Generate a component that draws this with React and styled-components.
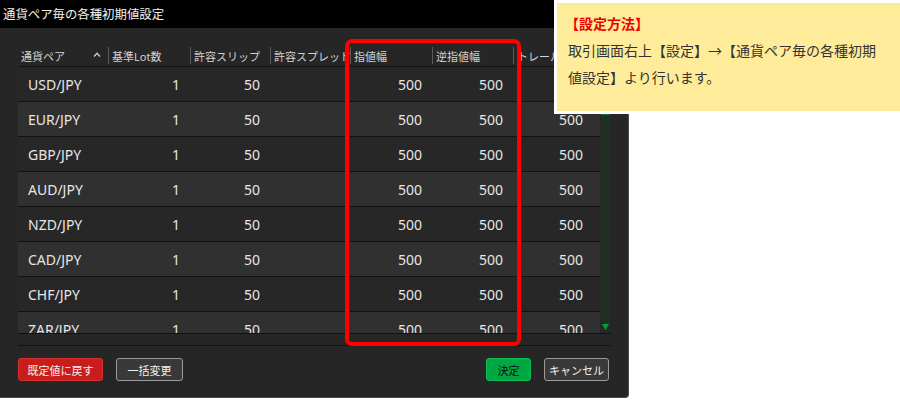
import React from 'react'
import styled, {createGlobalStyle} from 'styled-components'

const GlobalStyle = createGlobalStyle`
    body {
        margin: 0;
        background: #fff;
        font-family: "Noto Sans", "Noto Sans CJK JP", sans-serif;
    }
`

const COLS = '90px 82px 80px 80px 82px 81px 80px'

const pairs = ['USD/JPY', 'EUR/JPY', 'GBP/JPY', 'AUD/JPY', 'NZD/JPY', 'CAD/JPY', 'CHF/JPY', 'ZAR/JPY']

const headers = ['通貨ペア', '基準Lot数', '許容スリップ', '許容スプレッド', '指値幅', '逆指値幅', 'トレール幅']

const App = () => {
    return (
        <Page>
            <GlobalStyle />
            <Dialog>
                <TitleBar>通貨ペア毎の各種初期値設定</TitleBar>
                <Body>
                    <Table>
                        <HeaderRow>
                            {headers.map((h, i) =>
                                <HeaderCell key={h} first={i === 0}>
                                    <span>{h}</span>
                                    {i === 0 &&
                                        <svg width="8" height="5" viewBox="0 0 8 5">
                                            <path d="M1 4.5 L4 1.2 L7 4.5" fill="none" stroke="#cfcfcf" strokeWidth="1.3"/>
                                        </svg>}
                                </HeaderCell>
                            )}
                        </HeaderRow>
                        <ListArea>
                            <Rows>
                                {pairs.map((p, i) =>
                                    <Row key={p} alt={i % 2 === 1}>
                                        <Cell left>{p}</Cell>
                                        <Cell>1</Cell>
                                        <Cell>50</Cell>
                                        <Cell></Cell>
                                        <Cell>500</Cell>
                                        <Cell>500</Cell>
                                        <Cell>500</Cell>
                                    </Row>
                                )}
                            </Rows>
                            <ScrollTrack>
                                <ScrollThumb />
                                <svg width="9" height="8" viewBox="0 0 9 8">
                                    <path d="M1 1 L8 1 L4.5 7 Z" fill="#0b9a3d"/>
                                </svg>
                            </ScrollTrack>
                        </ListArea>
                        <HScroll />
                    </Table>
                    <Footer>
                        <ButtonGroup>
                            <Button variant="danger" w={85}>既定値に戻す</Button>
                            <Button w={67}>一括変更</Button>
                        </ButtonGroup>
                        <ButtonGroup>
                            <Button variant="ok" w={45}>決定</Button>
                            <Button w={65}>キャンセル</Button>
                        </ButtonGroup>
                    </Footer>
                </Body>
            </Dialog>
            <Highlight />
            <Note>
                <NoteTitle>【設定方法】</NoteTitle>
                <NoteText>取引画面右上【設定】→【通貨ペア毎の各種初期</NoteText>
                <NoteText>値設定】より行います。</NoteText>
            </Note>
        </Page>
    )
}

const Page = styled.div`
    position: relative;
    width: 900px;
    height: 400px;
    overflow: hidden;
    background: #fff;
`

const Dialog = styled.div`
    width: 628px;
    height: 397px;
    display: flex;
    flex-direction: column;
    background: #262626;
    border-right: 1px solid #4c4c4c;
    border-bottom: 1px solid #4c4c4c;
    border-bottom-right-radius: 4px;
    overflow: hidden;
`

const TitleBar = styled.div`
    height: 28px;
    flex-shrink: 0;
    display: flex;
    align-items: center;
    padding-left: 3px;
    background: #000;
    color: #f2f2f2;
    font-size: 12.4px;
`

const Body = styled.div`
    flex: 1;
    padding: 16px 0 0 18px;
    display: flex;
    flex-direction: column;
`

const Table = styled.div`
    width: 593px;
    display: flex;
    flex-direction: column;
`

const HeaderRow = styled.div`
    display: grid;
    grid-template-columns: ${COLS};
    height: 22px;
    border-bottom: 1px solid #121212;
    width: 582px;
`

const HeaderCell = styled.div`
    display: flex;
    align-items: center;
    justify-content: space-between;
    padding: 0 7px 0 ${props => props.first ? '3px' : '3px'};
    font-size: 11px;
    color: #d4d4d4;
    white-space: nowrap;
    overflow: hidden;
    position: relative;
    border-left: ${props => props.first ? 'none' : '1px solid #5a5a5a'};
    margin: 3px 0 2px;
    svg {
        flex-shrink: 0;
        margin-bottom: 3px;
    }
`

const ListArea = styled.div`
    display: flex;
    height: 266px;
`

const Rows = styled.div`
    width: 582px;
    height: 266px;
    overflow: hidden;
`

const Row = styled.div`
    display: grid;
    grid-template-columns: ${COLS};
    height: 34px;
    border-bottom: 1px solid #121212;
    background: ${props => props.alt ? '#303030' : '#272727'};
`

const Cell = styled.div`
    display: flex;
    align-items: center;
    justify-content: ${props => props.left ? 'flex-start' : 'flex-end'};
    padding: ${props => props.left ? '0 0 0 10px' : '0 10px 0 0'};
    font-size: 14px;
    color: #e6e6e6;
`

const ScrollTrack = styled.div`
    width: 9px;
    margin-left: 1px;
    height: 264px;
    background: #1f2f23;
    display: flex;
    flex-direction: column;
    justify-content: space-between;
    align-items: center;
    padding-bottom: 0;
`

const ScrollThumb = styled.div`
    width: 9px;
    height: 48px;
    background: #0a7a30;
`

const HScroll = styled.div`
    height: 11px;
    border-top: 1px solid #121212;
    border-bottom: 1px solid #121212;
`

const Footer = styled.div`
    display: flex;
    justify-content: space-between;
    margin-top: 12px;
    padding-right: 19px;
`

const ButtonGroup = styled.div`
    display: flex;
    gap: 13px;
`

const Button = styled.button`
    width: ${props => props.w}px;
    height: 23px;
    padding: 0;
    border-radius: 3px;
    font-family: "Noto Sans", "Noto Sans CJK JP", sans-serif;
    font-size: 11px;
    background: ${props => props.variant === 'danger' ? '#c91d1d' : props.variant === 'ok' ? '#00a843' : '#393939'};
    border: 1px solid ${props => props.variant === 'danger' ? '#d83030' : props.variant === 'ok' ? '#0fbf55' : '#9a9a9a'};
    color: ${props => props.variant === 'ok' ? '#0d0d0d' : '#f0f0f0'};
`

const Highlight = styled.div`
    position: absolute;
    left: 345px;
    top: 39px;
    width: 168px;
    height: 299px;
    border: 4px solid #f00;
    border-radius: 7px;
    pointer-events: none;
`

const Note = styled.div`
    position: absolute;
    left: 554px;
    top: 0;
    width: 343px;
    height: 100px;
    background: #ffec9a;
    border: 3px solid #fff;
    border-right: none;
    padding: 8px 0 0 11px;
    box-sizing: content-box;
    color: #333;
`

const NoteTitle = styled.div`
    font-size: 14px;
    font-weight: bold;
    color: #ee0000;
    line-height: 26px;
    margin-left: -3px;
`

const NoteText = styled.div`
    font-size: 14px;
    line-height: 27px;
    white-space: nowrap;
`

export default App
